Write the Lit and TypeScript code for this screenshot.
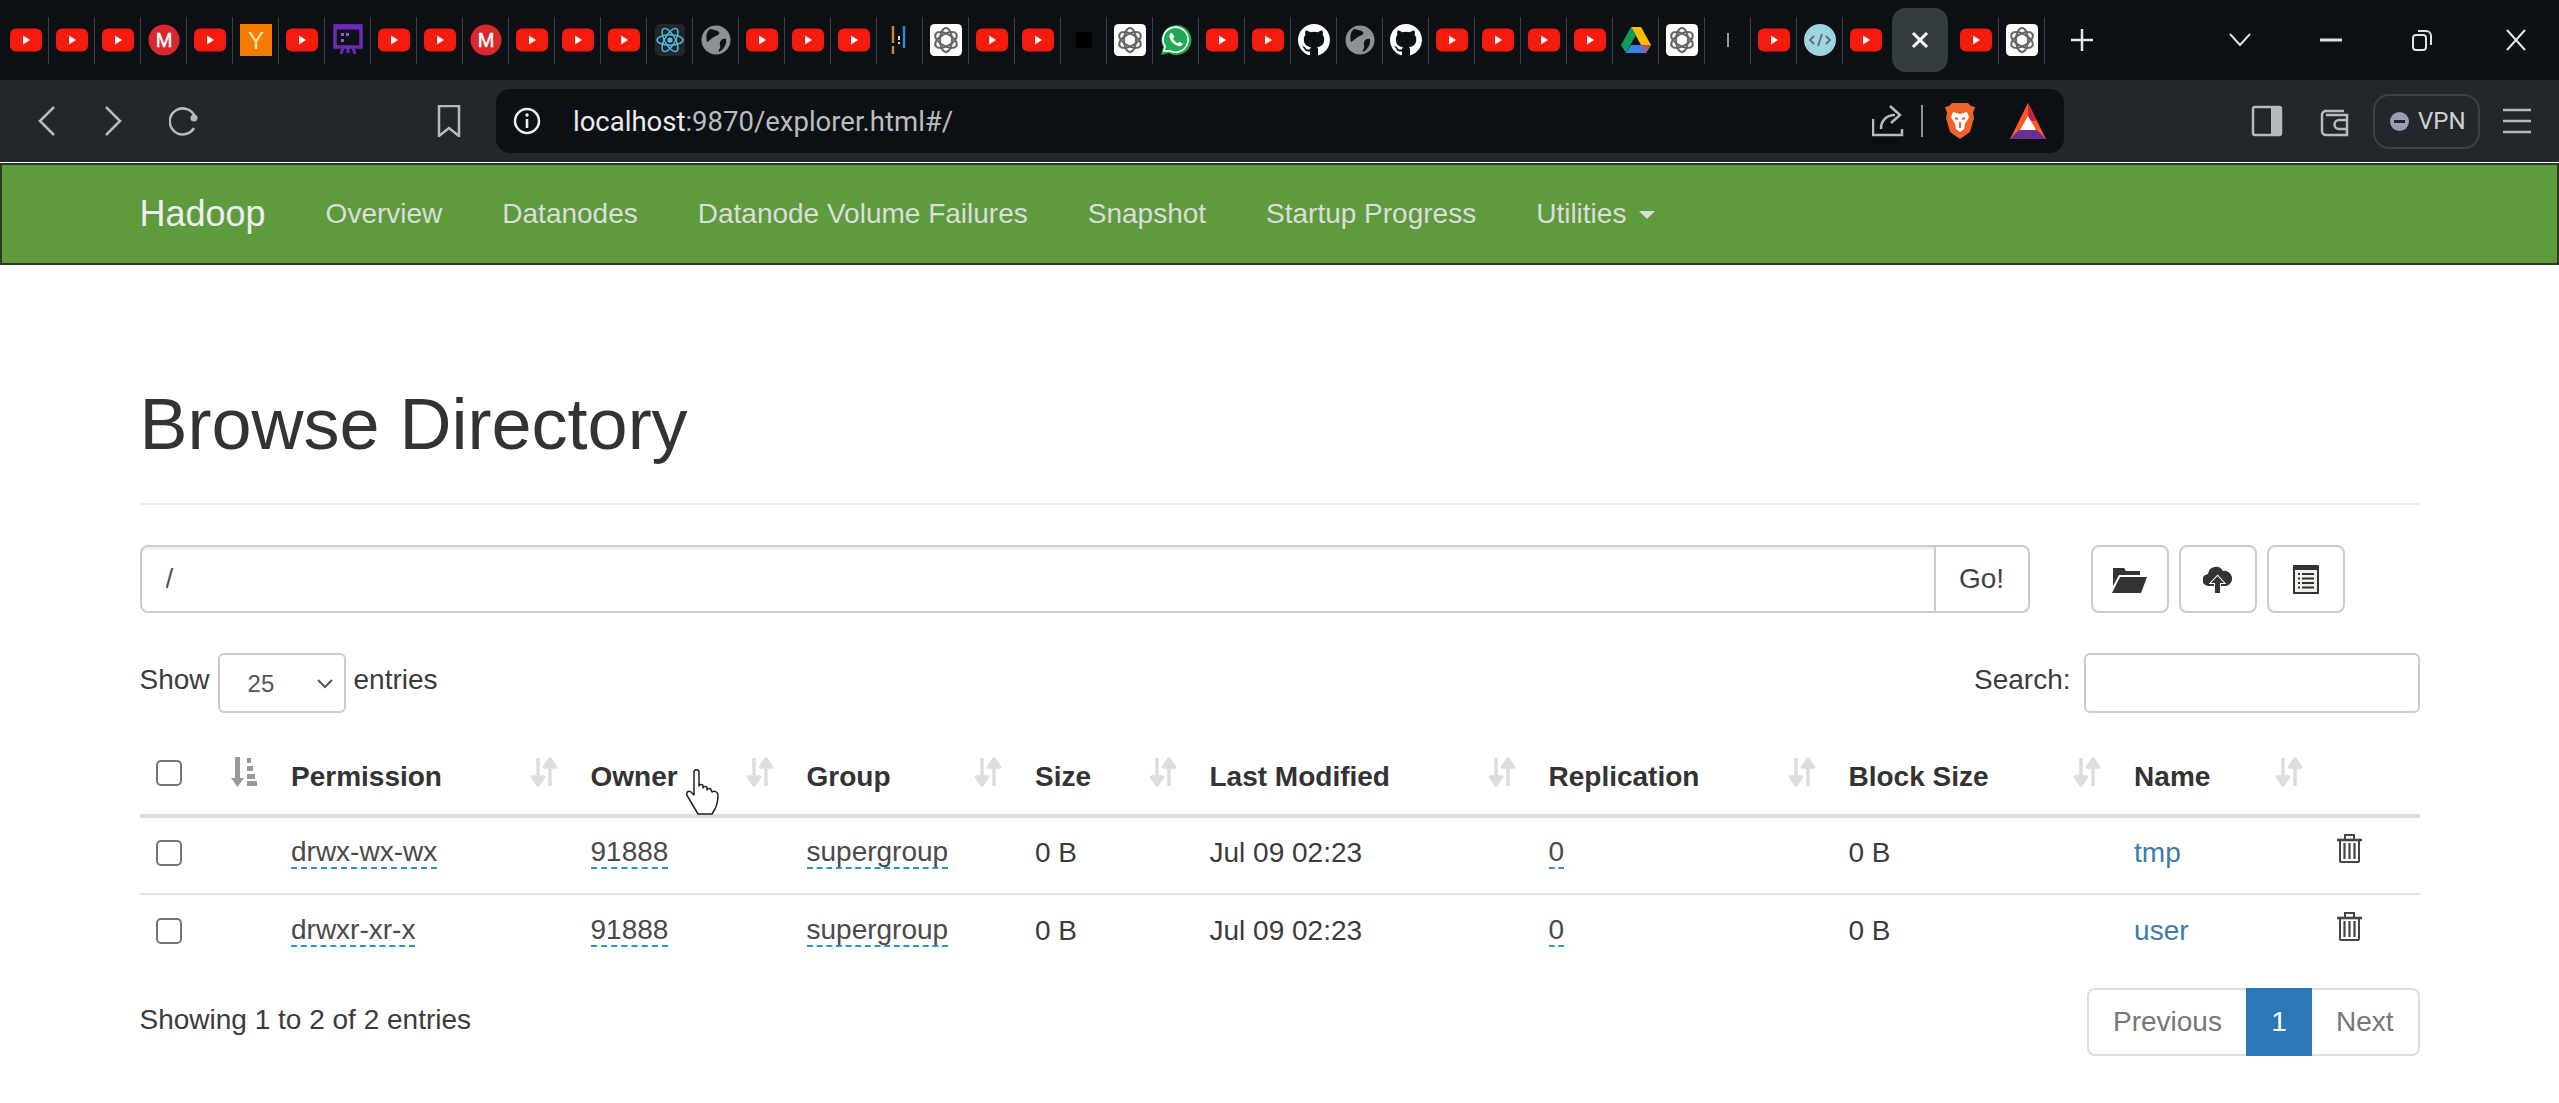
import { LitElement, css, html, svg } from "lit";
import { customElement } from "lit/decorators.js";

const GITHUB =
  "M8 0C3.58 0 0 3.58 0 8c0 3.54 2.29 6.53 5.47 7.59.4.07.55-.17.55-.38 0-.19-.01-.82-.01-1.49-2.01.37-2.53-.49-2.69-.94-.09-.23-.48-.94-.82-1.13-.28-.15-.68-.52-.01-.53.63-.01 1.08.58 1.23.82.72 1.21 1.87.87 2.33.66.07-.52.28-.87.51-1.07-1.78-.2-3.64-.89-3.64-3.95 0-.87.31-1.59.82-2.15-.08-.2-.36-1.02.08-2.12 0 0 .67-.21 2.2.82.64-.18 1.32-.27 2-.27.68 0 1.36.09 2 .27 1.53-1.04 2.2-.82 2.2-.82.44 1.1.16 1.92.08 2.12.51.56.82 1.27.82 2.15 0 3.07-1.87 3.75-3.65 3.95.29.25.54.73.54 1.48 0 1.07-.01 1.93-.01 2.2 0 .21.15.46.55.38A8.013 8.013 0 0016 8c0-4.42-3.58-8-8-8z";

// favicons, all in a 32 box
const favicons: Record<string, unknown> = {
  yt: svg`<rect x="0" y="4.5" width="32" height="23" rx="6" fill="#f61c0d"/><path d="M13 11.5l7 4.5-7 4.5z" fill="#fff"/>`,
  m: svg`<circle cx="16" cy="16" r="15.5" fill="#d9272e"/><text x="16" y="23" text-anchor="middle" font-family="Liberation Sans" font-size="20" stroke="#fff" stroke-width=".5" fill="#fff">M</text>`,
  y: svg`<rect width="32" height="32" fill="#f57c00"/><text x="16" y="25" text-anchor="middle" font-family="Liberation Sans" font-size="24" fill="#ffe0b2">Y</text>`,
  screen: svg`<path d="M3 2h26v21H3z" fill="#0e1216" stroke="#6a2bb8" stroke-width="3.5"/><path d="M3 3h26" stroke="#6a2bb8" stroke-width="5"/><path d="M9 9h3v3H9zM9 15h3v3H9zM14 9h3v3h-3z" fill="#8d5bd0"/><path d="M11 24l-2 6M21 24l2 6M16 24v5" stroke="#6a2bb8" stroke-width="3"/>`,
  react: svg`<rect x="1" y="0" width="30" height="32" rx="5" fill="#20262b"/><g fill="none" stroke="#53c1de" stroke-width="1.4"><ellipse cx="16" cy="16" rx="13" ry="5.2"/><ellipse cx="16" cy="16" rx="13" ry="5.2" transform="rotate(60 16 16)"/><ellipse cx="16" cy="16" rx="13" ry="5.2" transform="rotate(120 16 16)"/></g><circle cx="16" cy="16" r="2.6" fill="#53c1de"/>`,
  globe: svg`<circle cx="16" cy="16" r="14.5" fill="#8c9196"/><path d="M10 5c4 1 7 1 9 3s-3 4-5 5-5 4-7 5c-1-5-1-10 3-13zM26 15c-3-1-5 1-6 3s1 4 0 6-2 3-1 4c4-2 8-7 7-13z" fill="#0e1216"/>`,
  bars: svg`<path d="M9 2v17M9 22v8" stroke="#c98a3a" stroke-width="2.4"/><path d="M15 12v4M15 18v2" stroke="#ddd" stroke-width="2"/><path d="M20 2v22" stroke="#2b8fd6" stroke-width="2.4"/>`,
  gpt: svg`<rect width="32" height="32" rx="4.5" fill="#fff"/><g fill="none" stroke="#666" stroke-width="2"><ellipse cx="16" cy="16" rx="6" ry="12"/><ellipse cx="16" cy="16" rx="6" ry="12" transform="rotate(60 16 16)"/><ellipse cx="16" cy="16" rx="6" ry="12" transform="rotate(120 16 16)"/></g>`,
  black: svg`<rect x="8" y="8" width="16" height="16" fill="#000"/>`,
  wa: svg`<path d="M1 31l2.2-8A15 15 0 1 1 9 29z" fill="#1fa855"/><path d="M3.800 27l1.300-4.500A12.500 12.500 0 1 1 9.700 26.700z" fill="none" stroke="#fff" stroke-width="1.600"/><path d="M11.500 8.500c-1.500.8-2.500 2.800-1.800 5 1.200 4 4.800 7.500 8.500 8.500 2.200.6 4-.4 4.800-2l-3.600-2.300-1.800 1.500c-2-.8-3.900-2.800-4.600-4.700l1.500-1.800z" fill="#fff"/>`,
  gh: svg`<g transform="scale(2)"><path d="${GITHUB}" fill="#fff"/></g>`,
  drive: svg`<path d="M11 3h10l10 18H21z" fill="#fbbc04"/><path d="M11 3L1 21l5 8 10-18z" fill="#0f9d58"/><path d="M6 29h20l5-8H11z" fill="#3d7ee8"/><path d="M21 21h10l-5 8z" fill="#ea4335" opacity=".7"/>`,
  excl: svg`<path d="M16 9v14" stroke="#9a9a9a" stroke-width="2"/>`,
  code: svg`<circle cx="16" cy="16" r="16" fill="#9fd3de"/><path d="M10 12l-4 4 4 4M22 12l4 4-4 4M18 10l-4 12" fill="none" stroke="#55707a" stroke-width="1.800"/>`,
};

const TABS_LEFT =
  "yt yt yt m yt y yt screen yt yt m yt yt yt react globe yt yt yt bars gpt yt yt black gpt wa yt yt gh globe gh yt yt yt yt drive gpt excl yt code yt".split(" ");
const TABS_RIGHT = ["yt", "gpt"];

const NAV = ["Overview", "Datanodes", "Datanode Volume Failures", "Snapshot", "Startup Progress"];
const HEADS = ["Permission", "Owner", "Group", "Size", "Last Modified", "Replication", "Block Size", "Name"];
const ROWS = [
  { perm: "drwx-wx-wx", name: "tmp" },
  { perm: "drwxr-xr-x", name: "user" },
];

const sortIcon = html`<svg class="sort" viewBox="0 0 28 30" width="28" height="30"><path d="M8 1v22M2.500 20L8 28l5.500-8z" fill="#ddd" stroke="#ddd" stroke-width="3.500" stroke-linejoin="round"/><path d="M20 29V7M14.500 10L20 2l5.500 8z" fill="#ddd" stroke="#ddd" stroke-width="3.500" stroke-linejoin="round"/></svg>`;
const sortActive = html`<svg class="sort" viewBox="0 0 28 30" width="28" height="30" fill="#999"><path d="M5 0h5v21h4l-6.500 9L1 21h4z"/><path d="M17 1h4v5h-4zM17 9h6v5h-6zM17 17h8v5h-8zM17 24h10v5H17z"/></svg>`;
const trash = html`<svg viewBox="0 0 25 30" width="25" height="30" fill="none" stroke="#444" stroke-width="2"><path d="M0 7h25" stroke-width="2.600"/><path d="M8 6V2h9v4"/><path d="M3 8v20a1 1 0 0 0 1 1h17a1 1 0 0 0 1-1V8"/><path d="M7.500 10v16M12.500 10v16M17.500 10v16" stroke-width="2.200"/></svg>`;

@customElement("app-root")
export class AppRoot extends LitElement {
  static styles = css`
    :host {
      display: block;
      height: 1103px;
      overflow: hidden;
      background: #fff;
      color: #3b3b3b;
      font-family: "Liberation Sans", Arial, sans-serif;
      font-size: 28px;
      position: relative;
    }
    .tabstrip {
      display: flex;
      align-items: center;
      height: 80px;
      padding-left: 3.4px;
      background: #0c1014;
    }
    .tab {
      flex: 0 0 46px;
      height: 47px;
      display: flex;
      align-items: center;
      justify-content: center;
      box-sizing: border-box;
      border-right: 1px solid #3a3f44;
    }
    .tab.plain {
      border-right: 0;
    }
    .active {
      flex: 0 0 56px;
      height: 64px;
      margin: 0 5px 0 3px;
      border-radius: 14px;
      background: #343c40;
      display: flex;
      align-items: center;
      justify-content: center;
    }
    .new-tab {
      margin-left: 26px;
      display: flex;
    }
    .win {
      margin-left: auto;
      display: flex;
      align-items: center;
      gap: 69px;
      padding-right: 33px;
    }
    .win .restore {
      margin-left: 1px;
    }
    .win .close {
      margin-left: 5px;
    }
    .toolbar {
      display: flex;
      align-items: center;
      height: 82px;
      background: #23272b;
      padding-left: 37px;
      box-sizing: border-box;
    }
    .tb-left {
      display: flex;
      align-items: center;
      gap: 46px;
    }
    .bookmark {
      margin: 0 35px 0 238px;
      display: flex;
    }
    .address {
      width: 1568px;
      height: 64px;
      border-radius: 14px;
      background: #0c1014;
      display: flex;
      align-items: center;
      padding: 0 18px 0 17px;
      box-sizing: border-box;
      color: #b9bcbf;
      font-family: Roboto, "Liberation Sans", sans-serif;
      font-size: 27.5px;
    }
    .url {
      margin-left: 32px;
      flex: 1;
    }
    .url b {
      font-weight: 400;
      color: #ececec;
    }
    .addr-icons {
      display: flex;
      align-items: center;
    }
    .addr-icons .bat {
      margin-left: 34px;
    }
    .divider {
      width: 2px;
      height: 32px;
      background: #8f9396;
      margin: 0 21px 0 17px;
    }
    .tb-right {
      display: flex;
      align-items: center;
      margin-left: 187px;
    }
    .tb-right .wallet {
      margin-left: 36px;
    }
    .vpn {
      display: flex;
      align-items: center;
      gap: 9px;
      height: 55px;
      width: 107px;
      box-sizing: border-box;
      margin: 0 23px 0 22px;
      padding-left: 15px;
      border: 2px solid #3b4146;
      border-radius: 16px;
      color: #cfd2d4;
      font-size: 24px;
      font-family: Roboto, "Liberation Sans", sans-serif;
    }
    .vpn i {
      width: 19px;
      height: 19px;
      border-radius: 50%;
      background: #9a9cb0;
      display: flex;
      align-items: center;
      justify-content: center;
    }
    .vpn i::after {
      content: "";
      width: 11px;
      height: 3px;
      background: #23272b;
    }
    .navbar {
      height: 102px;
      margin-top: 1px;
      box-sizing: border-box;
      border: 2px solid #2c3a22;
      background: #5e9b3d;
      display: flex;
      align-items: center;
      padding-left: 137.5px;
      color: #dcdcdc;
    }
    .brand {
      font-size: 36px;
      color: #eee;
      margin-right: 60px;
    }
    .navbar ul {
      display: flex;
      gap: 60px;
      list-style: none;
      margin: 0;
      padding: 0;
    }
    .navbar li {
      display: flex;
      align-items: center;
    }
    .caret {
      width: 0;
      height: 0;
      margin-left: 13px;
      margin-top: 2px;
      border-top: 8px solid #dcdcdc;
      border-left: 8px solid transparent;
      border-right: 8px solid transparent;
    }
    main {
      padding: 120px 139.5px 0;
    }
    .page-header {
      padding-bottom: 39px;
      border-bottom: 2px solid #eee;
      margin-bottom: 40px;
    }
    h1 {
      margin: 0;
      font-size: 72px;
      line-height: 79px;
      font-weight: 400;
      color: #333;
    }
    .path-row {
      display: flex;
      height: 68px;
    }
    .group {
      display: flex;
      width: 1890px;
    }
    .path {
      flex: 1;
      min-width: 0;
      box-sizing: border-box;
      height: 68px;
      padding: 0 24px;
      border: 2px solid #ccc;
      border-radius: 8px 0 0 8px;
      color: #555;
      font: inherit;
      box-shadow: inset 0 2px 2px rgba(0, 0, 0, 0.075);
    }
    .btn {
      box-sizing: border-box;
      height: 68px;
      display: flex;
      align-items: center;
      justify-content: center;
      background: #fff;
      border: 2px solid #ccc;
      border-radius: 8px;
      color: #444;
      font: inherit;
      padding: 0;
    }
    .go {
      width: 96px;
      margin-left: -2px;
      border-radius: 0 8px 8px 0;
    }
    .actions {
      display: flex;
      gap: 10px;
      margin-left: 61px;
    }
    .actions .btn {
      width: 78px;
    }
    .controls {
      display: flex;
      justify-content: space-between;
      margin-top: 40px;
      height: 60px;
    }
    .length,
    .filter {
      display: flex;
      align-items: center;
      height: 54px;
      gap: 8px;
    }
    .filter {
      gap: 13px;
    }
    .select {
      box-sizing: border-box;
      width: 128px;
      height: 60px;
      margin: 6px 0 0;
      display: flex;
      align-items: center;
      justify-content: space-between;
      padding: 2px 11px 0 28px;
      border: 2px solid #ccc;
      border-radius: 6px;
      font-size: 24px;
      color: #555;
    }
    .search {
      box-sizing: border-box;
      width: 336px;
      height: 60px;
      margin-top: 6px;
      border: 2px solid #ccc;
      border-radius: 6px;
    }
    table {
      width: 100%;
      table-layout: fixed;
      border-collapse: collapse;
      margin-top: 12px;
    }
    col.c-check { width: 58px; }
    col.c-sort { width: 77.5px; }
    col.c-perm { width: 299.5px; }
    col.c-owner { width: 216px; }
    col.c-group { width: 228.5px; }
    col.c-size { width: 174.5px; }
    col.c-mod { width: 339px; }
    col.c-rep { width: 300px; }
    col.c-block { width: 285.6px; }
    col.c-name { width: 202.4px; }
    th {
      height: 91px;
      box-sizing: border-box;
      padding: 0 0 18px 16px;
      text-align: left;
      color: #333;
      border-bottom: 4px solid #ddd;
      vertical-align: bottom;
    }
    .th-inner {
      display: flex;
      align-items: center;
      justify-content: space-between;
      height: 44px;
      padding-right: 17px;
    }
    .th-inner span {
      padding-top: 6px;
    }
    .sort {
      display: block;
      margin-top: -4px;
    }
    th.cb-cell .box {
      margin: 0 0 10px;
    }
    td {
      height: 78px;
      box-sizing: border-box;
      padding: 0 0 6px 16px;
      vertical-align: middle;
      border-bottom: 2px solid #e4e4e4;
      white-space: nowrap;
    }
    tr:last-child td {
      border-bottom: 0;
    }
    .box {
      display: block;
      width: 26px;
      height: 26px;
      box-sizing: border-box;
      border: 2px solid #767676;
      border-radius: 5px;
      background: #fff;
    }
    .abbr {
      display: inline-block;
      line-height: 30px;
      border-bottom: 2px dashed #2f93c4;
      color: #4a4a4a;
    }
    a {
      color: #3a7cb0;
      text-decoration: none;
    }
    td.icon-cell {
      padding: 0 0 15px 17px;
    }
    .icon-cell svg {
      display: block;
    }
    .footer {
      display: flex;
      justify-content: space-between;
      margin-top: 16px;
    }
    .info {
      line-height: 40px;
      margin-top: 12px;
    }
    .pager {
      display: flex;
      height: 68px;
      box-sizing: border-box;
      border: 2px solid #ddd;
      border-radius: 8px;
      color: #777;
      align-items: center;
    }
    .pager span {
      padding: 0 24px;
    }
    .pager .current {
      align-self: stretch;
      margin: -2px 0;
      width: 66px;
      padding: 0;
      display: flex;
      align-items: center;
      justify-content: center;
      background: #2b77b7;
      color: #fff;
    }
    .cursor {
      position: absolute;
      left: 685px;
      top: 769px;
    }
  `;

  private favicon(name: string) {
    return html`<svg viewBox="0 0 32 32" width="32" height="32">${favicons[name]}</svg>`;
  }

  private renderChrome() {
    const line = "fill:none;stroke:#b8bbbd;stroke-width:2.5";
    return html`
      <div class="tabstrip">
        ${TABS_LEFT.map(
          (t, i) => html`<div class="tab ${i === TABS_LEFT.length - 1 ? "plain" : ""}">${this.favicon(t)}</div>`
        )}
        <div class="active">
          <svg viewBox="0 0 18 18" width="18" height="18"><path d="M2 2l14 14M16 2L2 16" stroke="#fff" stroke-width="3" /></svg>
        </div>
        ${TABS_RIGHT.map((t) => html`<div class="tab">${this.favicon(t)}</div>`)}
        <div class="new-tab">
          <svg viewBox="0 0 22 22" width="22" height="22"><path d="M11 0v22M0 11h22" stroke="#e6e6e6" stroke-width="2.500" /></svg>
        </div>
        <div class="win">
          <svg viewBox="0 0 22 14" width="22" height="14"><path d="M1 1l10 11L21 1" fill="none" stroke="#e0e0e0" stroke-width="2" /></svg>
          <svg viewBox="0 0 22 4" width="22" height="4"><path d="M0 2h22" stroke="#e0e0e0" stroke-width="3" /></svg>
          <svg class="restore" viewBox="0 0 20 22" width="20" height="22" fill="none" stroke="#e0e0e0" stroke-width="2"><rect x="1" y="6" width="13" height="15" rx="3" /><path d="M6 2h8a5 5 0 0 1 5 5v9" /></svg>
          <svg class="close" viewBox="0 0 20 22" width="20" height="22"><path d="M1 1l18 20M19 1L1 21" stroke="#e6e6e6" stroke-width="2" /></svg>
        </div>
      </div>
      <div class="toolbar">
        <div class="tb-left">
          <svg viewBox="0 0 20 30" width="20" height="30"><path d="M17 1L3 15l14 14" style=${line} /></svg>
          <svg viewBox="0 0 20 30" width="20" height="30"><path d="M3 1l14 14L3 29" style=${line} /></svg>
          <svg viewBox="0 0 30 30" width="30" height="30"><path d="M25 22a13 13 0 1 1 1-11" style=${line} /><circle cx="25" cy="12" r="3.500" fill="#b8bbbd" /></svg>
        </div>
        <div class="bookmark">
          <svg viewBox="0 0 24 32" width="24" height="32"><path d="M2 1h20v30l-10-8-10 8z" style=${line} /></svg>
        </div>
        <div class="address">
          <svg viewBox="0 0 28 28" width="28" height="28"><circle cx="14" cy="14" r="12" fill="none" stroke="#eee" stroke-width="2.500" /><path d="M14 12v9" stroke="#eee" stroke-width="2.600" /><circle cx="14" cy="8" r="1.700" fill="#eee" /></svg>
          <div class="url"><b>localhost</b>:9870/explorer.html#/</div>
          <div class="addr-icons">
            <svg viewBox="0 0 32 32" width="32" height="32"><path d="M1 14v16h29v-6M9 24c0-9 6-14 14-14M18 1l10 9-9 8" style=${line} /></svg>
            <div class="divider"></div>
            <svg viewBox="0 0 32 38" width="32" height="38"><path d="M8 1h16l3 3 4 1-2 6 1 5-4 14-10 7-10-7-4-14 1-5-2-6 4-1z" fill="#f0622a" /><path d="M9 10l7 2 7-2 2 5-4 7-1 5-4 3-4-3-1-5-4-7z" fill="#fff" /><path d="M11 16l3 1M21 16l-3 1M16 20v6" stroke="#f0622a" stroke-width="2" /></svg>
            <svg class="bat" viewBox="0 0 36 36" width="36" height="36"><path d="M18 0l18 36H0z" fill="#ff5a1f" /><path d="M18 0l9 18H18z" fill="#c9204e" /><path d="M0 36l9-9h18l9 9z" fill="#6b2f91" /><path d="M18 13l8 14H10z" fill="#fff" /></svg>
          </div>
        </div>
        <div class="tb-right">
          <svg viewBox="0 0 32 32" width="32" height="32"><rect x="2" y="2" width="28" height="28" rx="2" fill="none" stroke="#b8bbbd" stroke-width="2.500" /><rect x="20" y="2" width="10" height="28" fill="#b8bbbd" /></svg>
          <svg class="wallet" viewBox="0 0 32 32" width="32" height="32"><path d="M5 6h20M3 10a4 4 0 0 1 4-4M3 10v16a4 4 0 0 0 4 4h21V10H7" style=${line} /><path d="M29 15H20a4 4 0 0 0 0 9h9" style=${line} /></svg>
          <div class="vpn"><i></i>VPN</div>
          <svg viewBox="0 0 28 26" width="28" height="26"><path d="M0 2h28M0 13h28M0 24h28" stroke="#b8bbbd" stroke-width="2.500" /></svg>
        </div>
      </div>
    `;
  }

  render() {
    return html`
      ${this.renderChrome()}
      <nav class="navbar">
        <div class="brand">Hadoop</div>
        <ul>
          ${NAV.map((n) => html`<li>${n}</li>`)}
          <li>Utilities<span class="caret"></span></li>
        </ul>
      </nav>
      <main>
        <div class="page-header"><h1>Browse Directory</h1></div>
        <div class="path-row">
          <div class="group">
            <input class="path" .value=${"/"} />
            <button class="btn go">Go!</button>
          </div>
          <div class="actions">
            <button class="btn">
              <svg viewBox="0 0 35 27" width="35" height="27" fill="#333"><path d="M1 7V2h11l2 3h14v4H7L1 20zM8 11h27l-6 16H0z" /></svg>
            </button>
            <button class="btn">
              <svg viewBox="0 0 29 28" width="29" height="28" fill="#333"><path d="M6 21a6 6 0 0 1-1-12 8 8 0 0 1 15-3 6 6 0 0 1 3 15H6z" /><path d="M14.500 11L21 18h-4v10h-5V18H8z" stroke="#fff" stroke-width="2" paint-order="stroke" /></svg>
            </button>
            <button class="btn">
              <svg viewBox="0 0 26 29" width="26" height="29"><rect width="26" height="29" rx="1" fill="#333" /><rect x="2" y="5" width="22" height="22" fill="#f1f1ec" /><path d="M5 9h2M5 13.500h2M5 18h2M5 22.500h2M9 9h12M9 13.500h12M9 18h12M9 22.500h12" stroke="#333" stroke-width="2" /></svg>
            </button>
          </div>
        </div>
        <div class="controls">
          <div class="length">
            Show
            <div class="select">
              25
              <svg viewBox="0 0 16 10" width="16" height="10"><path d="M1 1l7 7 7-7" fill="none" stroke="#555" stroke-width="2" /></svg>
            </div>
            entries
          </div>
          <div class="filter">Search: <input class="search" /></div>
        </div>
        <table>
          <colgroup>
            <col class="c-check" /><col class="c-sort" /><col class="c-perm" /><col class="c-owner" /><col class="c-group" />
            <col class="c-size" /><col class="c-mod" /><col class="c-rep" /><col class="c-block" /><col class="c-name" /><col />
          </colgroup>
          <thead>
            <tr>
              <th class="cb-cell"><span class="box"></span></th>
              <th><div class="th-inner"><i></i>${sortActive}</div></th>
              ${HEADS.map((h) => html`<th><div class="th-inner"><span>${h}</span>${sortIcon}</div></th>`)}
              <th></th>
            </tr>
          </thead>
          <tbody>
            ${ROWS.map(
              (r) => html`
                <tr>
                  <td><span class="box"></span></td>
                  <td></td>
                  <td><span class="abbr">${r.perm}</span></td>
                  <td><span class="abbr">91888</span></td>
                  <td><span class="abbr">supergroup</span></td>
                  <td>0 B</td>
                  <td>Jul 09 02:23</td>
                  <td><span class="abbr">0</span></td>
                  <td>0 B</td>
                  <td><a>${r.name}</a></td>
                  <td class="icon-cell">${trash}</td>
                </tr>
              `
            )}
          </tbody>
        </table>
        <div class="footer">
          <div class="info">Showing 1 to 2 of 2 entries</div>
          <div class="pager"><span>Previous</span><span class="current">1</span><span>Next</span></div>
        </div>
      </main>
      <svg class="cursor" viewBox="0 0 35 46" width="35" height="46">
        <path d="M9 3c0-3 5-3 5 0v14c0-2 4-2 4 0v2c0-2 4-2 4 0v2c0-2 4-2 4 0l1 2c2-2 6 0 6 3 0 6-1 10-3 14l-3 5H13L3 28c-3-4 0-7 3-5l3 3z" fill="#fff" stroke="#222" stroke-width="1.500" stroke-linejoin="round" />
      </svg>
    `;
  }
}
